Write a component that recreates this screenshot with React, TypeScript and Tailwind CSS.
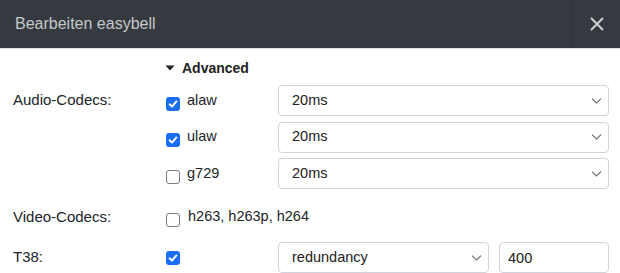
import { useState } from 'react';

const Check = ({ checked }: { checked: boolean }) =>
  checked ? (
    <span className="flex h-[14px] w-[14px] shrink-0 items-center justify-center rounded-[3px] bg-[#1a6ef5]">
      <svg width="10" height="10" viewBox="0 0 10 10" fill="none">
        <path
          d="M1.6 5.3 L4 7.6 L8.4 2.4"
          stroke="white"
          strokeWidth="1.9"
          strokeLinecap="round"
          strokeLinejoin="round"
        />
      </svg>
    </span>
  ) : (
    <span className="block h-[14px] w-[14px] shrink-0 rounded-[3px] border border-[#7a7a7a] bg-white" />
  );

const Chevron = () => (
  <svg
    className="pointer-events-none absolute right-[7px] top-1/2 -translate-y-1/2"
    width="11"
    height="7"
    viewBox="0 0 11 7"
    fill="none"
  >
    <path d="M1 1.2 L5.5 5.6 L10 1.2" stroke="#5f6368" strokeWidth="1.1" />
  </svg>
);

const Select = ({ value, className }: { value: string; className: string }) => (
  <div className={`relative h-[31px] ${className}`}>
    <select
      defaultValue={value}
      className="h-full w-full appearance-none rounded-[4px] border border-[#cfd4da] bg-white pl-[13px] text-[14.5px] text-[#222] outline-none"
    >
      <option>{value}</option>
    </select>
    <Chevron />
  </div>
);

const codecs = [
  { name: 'alaw', on: true },
  { name: 'ulaw', on: true },
  { name: 'g729', on: false },
];

export default function App() {
  const [open] = useState(true);

  return (
    <div className="h-[273px] w-[620px] overflow-hidden bg-white font-['Liberation_Sans',Arial,sans-serif] text-[#212529]">
      <div className="flex h-[49px] items-stretch border-b border-[#dde2e8] bg-[#343a40]">
        <div className="flex flex-1 items-center pl-[15px] text-[16px] text-[#c6c8ca]">
          Bearbeiten easybell
        </div>
        <button className="flex w-[48px] items-center justify-center border-l border-[#2d3237]">
          <svg width="16" height="16" viewBox="0 0 16 16" fill="none">
            <path d="M2 2 L14 14 M14 2 L2 14" stroke="#cfd1d3" strokeWidth="1.9" />
          </svg>
        </button>
      </div>

      <div className="pl-[13px] pr-[11px]">
        <div className="mt-[9px] flex h-[20px] items-center pl-[152px]">
          <svg width="10" height="6" viewBox="0 0 10 6" className="mr-[7px]">
            <path d="M0.5 0.5 H9.5 L5 5.5 Z" fill="#222" />
          </svg>
          <span className="text-[14px] font-bold text-[#222]">Advanced</span>
        </div>

        {open && (
          <div className="mt-[7px] grid grid-cols-[153px_112px_1fr] gap-y-[5.5px]">
            {codecs.map((c, i) => (
              <div key={c.name} className="contents">
                <div className="flex h-[31px] items-center text-[15px]">
                  {i === 0 ? 'Audio-Codecs:' : ''}
                </div>
                <label className="flex h-[31px] items-center gap-[7px] text-[14.5px]">
                  <span className="mt-[6px]">
                    <Check checked={c.on} />
                  </span>
                  {c.name}
                </label>
                <Select value="20ms" className="w-full" />
              </div>
            ))}
          </div>
        )}

        <div className="mt-[16px] grid h-[24px] grid-cols-[153px_1fr] items-center">
          <div className="text-[15px]">Video-Codecs:</div>
          <label className="flex items-center gap-[8px] text-[14.5px]">
            <span className="mt-[6px]">
              <Check checked={false} />
            </span>
            h263, h263p, h264
          </label>
        </div>

        <div className="mt-[13px] grid grid-cols-[153px_112px_1fr] items-center">
          <div className="text-[15px]">T38:</div>
          <div className="flex items-center">
            <Check checked={true} />
          </div>
          <div className="flex gap-[10px]">
            <Select value="redundancy" className="w-[211px]" />
            <input
              defaultValue="400"
              className="h-[31px] w-[110px] rounded-[4px] border border-[#cfd4da] pl-[8px] text-[14.5px] text-[#222] outline-none"
            />
          </div>
        </div>
      </div>
    </div>
  );
}
